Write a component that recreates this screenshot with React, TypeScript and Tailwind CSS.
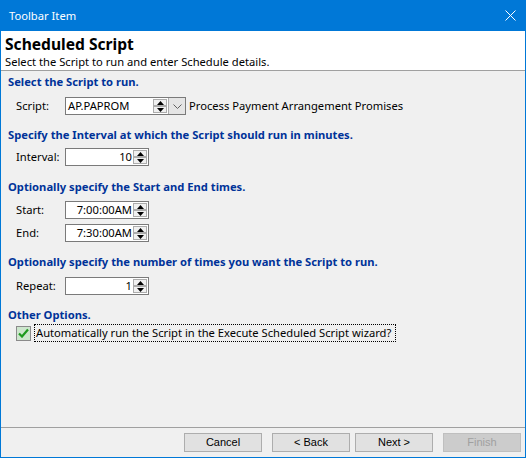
import React from 'react'

// little up/down spinner that sits on the right edge of the numeric boxes
function Spinner() {
  return (
    <div className="flex flex-col justify-between w-[15px] h-full py-[1px] pr-[1px]">
      <div className="h-[7px] bg-[#f0f0f0] border border-[#acacac] flex items-center justify-center">
        <svg width="7" height="4" viewBox="0 0 7 4">
          <path d="M3.5 0 L7 4 L0 4 Z" fill="#000" />
        </svg>
      </div>
      <div className="h-[7px] bg-[#f0f0f0] border border-[#acacac] flex items-center justify-center">
        <svg width="7" height="4" viewBox="0 0 7 4">
          <path d="M0 0 L7 0 L3.5 4 Z" fill="#000" />
        </svg>
      </div>
    </div>
  )
}

function NumberBox({ value, width = 'w-[84px]' }: { value: string; width?: string }) {
  return (
    <div className={`flex h-[18px] ${width} bg-white border border-[#7a7a7a]`}>
      <div className="flex-1 text-right pr-[1px] leading-[16px]">{value}</div>
      <Spinner />
    </div>
  )
}

function Heading({ children, className = '' }: { children: React.ReactNode; className?: string }) {
  return (
    <h2 className={`text-[11.2px] leading-[16px] font-bold text-[#003399] ${className}`}>
      {children}
    </h2>
  )
}

function Row({ label, children, className = '' }: { label: string; children: React.ReactNode; className?: string }) {
  return (
    <div className={`flex items-center pl-[8px] ${className}`}>
      <span className="w-[49px] leading-[16px]">{label}</span>
      {children}
    </div>
  )
}

function WizardButton({ label, disabled }: { label: string; disabled?: boolean }) {
  return (
    <button
      className={`w-[78px] h-[19px] border text-[11px] leading-[17px] font-['Liberation_Sans',Arial,sans-serif] ${
        disabled
          ? 'bg-[#cccccc] border-[#bfbfbf] text-[#a0a0a0]'
          : 'bg-[#e1e1e1] border-[#adadad] text-black'
      }`}
    >
      {label}
    </button>
  )
}

export default function App() {
  return (
    <div className="w-[526px] h-[458px] flex flex-col bg-[#f0f0f0] border border-t-0 border-[#0078d7] text-[11.2px] text-black font-['Noto_Sans',sans-serif]">
      {/* title bar */}
      <div className="h-[31px] bg-[#0078d7] flex items-center justify-between pl-[8px] pr-[9px] text-white">
        <span className="leading-[16px]">Toolbar Item</span>
        <svg width="11" height="11" viewBox="0 0 11 11">
          <path d="M0.5 0.5 L10.5 10.5 M10.5 0.5 L0.5 10.5" stroke="#fff" strokeWidth="1" />
        </svg>
      </div>

      {/* wizard header */}
      <div className="h-[40px] bg-white border-b border-[#a0a0a0] px-[4px] pt-[3px]">
        <h1 className="text-[15.6px] leading-[20px] font-bold">Scheduled Script</h1>
        <p className="leading-[15px]">Select the Script to run and enter Schedule details.</p>
      </div>

      {/* body */}
      <div className="flex-1 px-[7px] pt-[3px]">
        <Heading>Select the Script to run.</Heading>
        <Row label="Script:" className="mt-[7px]">
          <div className="flex h-[18px] w-[121px] bg-white border border-[#7a7a7a]">
            <div className="flex-1 pl-[2px] leading-[16px]">AP.PAPROM</div>
            <Spinner />
            <div className="w-[17px] h-full bg-[#e5e5e5] border-l border-[#acacac] flex items-center justify-center">
              <svg width="9" height="5" viewBox="0 0 9 5">
                <path d="M0.5 0.5 L4.5 4.5 L8.5 0.5" stroke="#606060" fill="none" />
              </svg>
            </div>
          </div>
          <span className="ml-[3px] leading-[16px]">Process Payment Arrangement Promises</span>
        </Row>

        <Heading className="mt-[12px]">Specify the Interval at which the Script should run in minutes.</Heading>
        <Row label="Interval:" className="mt-[5px]">
          <NumberBox value="10" />
        </Row>

        <Heading className="mt-[13px]">Optionally specify the Start and End times.</Heading>
        <Row label="Start:" className="mt-[6px]">
          <NumberBox value="7:00:00AM" />
        </Row>
        <Row label="End:" className="mt-[5px]">
          <NumberBox value="7:30:00AM" />
        </Row>

        <Heading className="mt-[12px]">Optionally specify the number of times you want the Script to run.</Heading>
        <Row label="Repeat:" className="mt-[7px]">
          <NumberBox value="1" />
        </Row>

        <Heading className="mt-[12px]">Other Options.</Heading>
        <div className="flex items-center pl-[8px] mt-[1px]">
          <div className="w-[15px] h-[15px] bg-[#cde6cd] border border-[#8a8a8a] flex items-center justify-center">
            <svg width="11" height="10" viewBox="0 0 11 10">
              <path d="M1 5.5 L4 8.5 L10 1.5" stroke="#1e9a1e" strokeWidth="2.2" fill="none" />
            </svg>
          </div>
          <span className="ml-[3px] pl-[1px] pr-[4px] h-[18px] leading-[16px] border border-dotted border-black">
            Automatically run the Script in the Execute Scheduled Script wizard?
          </span>
        </div>
      </div>

      {/* wizard buttons */}
      <div className="h-[30px] border-t border-[#a0a0a0] flex items-start justify-end pt-[5px] pr-[4px]">
        <WizardButton label="Cancel" />
        <div className="w-[10px]" />
        <WizardButton label="< Back" />
        <div className="w-[5px]" />
        <WizardButton label="Next >" />
        <div className="w-[10px]" />
        <WizardButton label="Finish" disabled />
      </div>
    </div>
  )
}
